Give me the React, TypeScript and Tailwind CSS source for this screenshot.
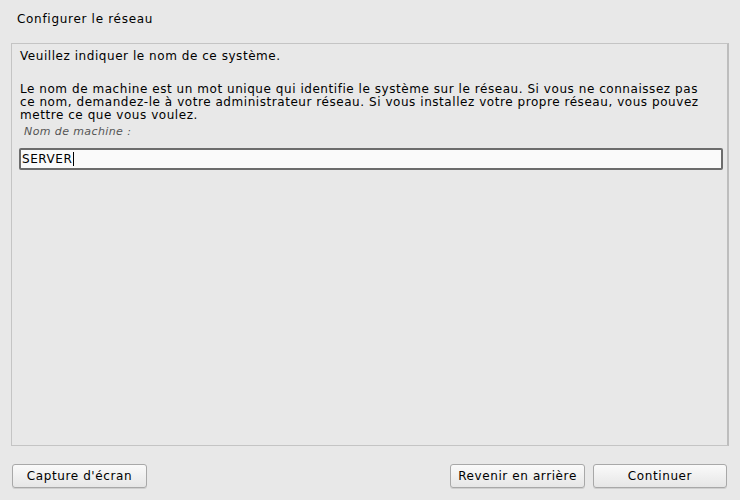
const font = { fontFamily: '"DejaVu Sans", sans-serif' };

const Button = ({ label, className }: { label: string; className: string }) => (
  <button
    className={`h-[24px] rounded-[3px] border border-[#a8a8a8] bg-gradient-to-b from-[#fafafa] to-[#e6e6e6] text-[12px] tracking-[0.6px] text-black shadow-[0_1px_0_#cfcfcf] ${className}`}
  >
    {label}
  </button>
);

export default function App() {
  return (
    <div
      className="flex h-[500px] w-[740px] flex-col bg-[#e8e8e8] text-[12px] tracking-[0.55px] text-black"
      style={font}
    >
      <div className="flex h-[43px] items-start pl-[17px] pt-[10px] tracking-[0.7px]">Configurer le réseau</div>

      <div className="mx-[11px] flex h-[403px] flex-col border border-[#c4c4c4] border-r-[2px] border-r-[#bdbdbd] px-[7px] pt-[5px]">
        <p className="pl-[1px] leading-[14px]">Veuillez indiquer le nom de ce système.</p>
        <p className="mt-[20px] whitespace-nowrap pl-[1px] leading-[13px]">
          Le nom de machine est un mot unique qui identifie le système sur le réseau. Si vous ne connaissez pas
          <br />
          ce nom, demandez-le à votre administrateur réseau. Si vous installez votre propre réseau, vous pouvez
          <br />
          mettre ce que vous voulez.
        </p>
        <p className="mt-[3px] pl-[5px] text-[11px] italic leading-[14px] tracking-[0.4px] text-[#555]">
          Nom de machine :
        </p>
        <div className="mt-[9px] flex h-[22px] w-[704px] items-center rounded-[2px] border-2 border-[#6c6c6c] bg-[#fafafa] pl-[1px]">
          <span>SERVER</span>
          <span className="ml-[1px] h-[14px] w-[1px] bg-black" />
        </div>
      </div>

      <div className="flex items-start px-[12px] pt-[18px]">
        <Button label="Capture d'écran" className="w-[135px]" />
        <div className="flex-1" />
        <Button label="Revenir en arrière" className="w-[135px]" />
        <Button label="Continuer" className="ml-[8px] mr-[1px] w-[134px]" />
      </div>
    </div>
  );
}
